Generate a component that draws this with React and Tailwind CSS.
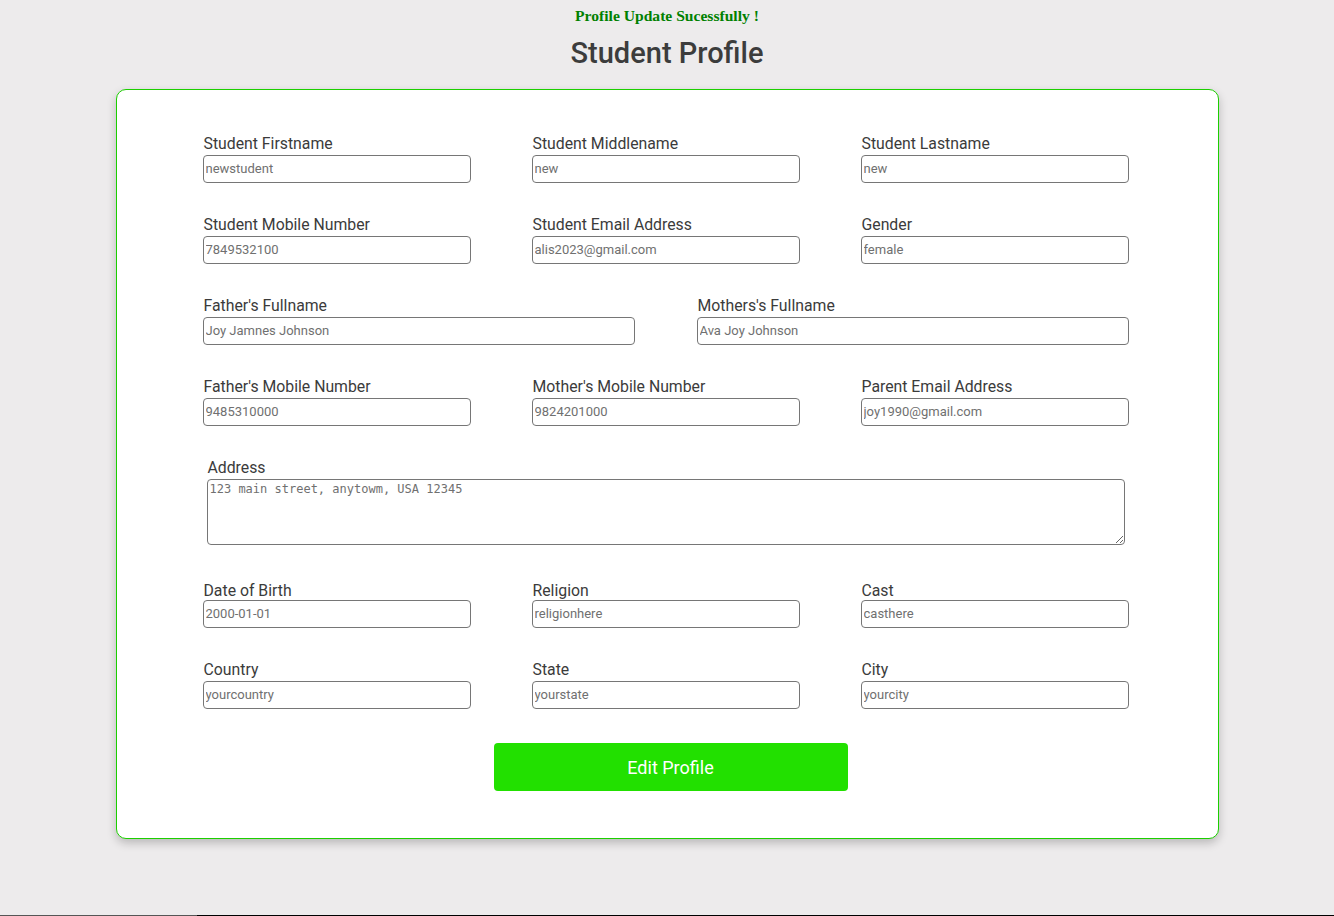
import React from "react";

const rows = [
  [
    ["Student Firstname", "newstudent"],
    ["Student Middlename", "new"],
    ["Student Lastname", "new"],
  ],
  [
    ["Student Mobile Number", "7849532100"],
    ["Student Email Address", "alis2023@gmail.com"],
    ["Gender", "female"],
  ],
];

const rowsAfterParents = [
  [
    ["Father's Mobile Number", "9485310000"],
    ["Mother's Mobile Number", "9824201000"],
    ["Parent Email Address", "joy1990@gmail.com"],
  ],
];

const rowsBottom = [
  [
    ["Date of Birth", "2000-01-01"],
    ["Religion", "religionhere"],
    ["Cast", "casthere"],
  ],
  [
    ["Country", "yourcountry"],
    ["State", "yourstate"],
    ["City", "yourcity"],
  ],
];

function Field({ label, value }) {
  return (
    <div className="flex flex-col">
      <label className="block h-[20px] leading-[22px] pl-[1px] text-[15.8px] text-[#3b3b3b]">{label}</label>
      <input
        readOnly
        value={value}
        className="mt-[2px] h-[28px] w-full rounded-[4px] border border-[#767676] bg-white px-[2px] pb-[2px] text-[13px] text-[#707070] outline-none"
        style={{ fontFamily: "Roboto, 'Liberation Sans', sans-serif" }}
      />
    </div>
  );
}

function Row3({ fields }) {
  return (
    <div className="grid grid-cols-[268px_268px_268px] gap-x-[61px] mb-[31px]">
      {fields.map(([l, v]) => (
        <Field key={l} label={l} value={v} />
      ))}
    </div>
  );
}

export default function App() {
  return (
    <div className="bg-[#edebec]" style={{ fontFamily: "Roboto, 'Liberation Sans', sans-serif" }}>
      <div className="h-[915px] flex flex-col items-center">
        <p
          className="mt-[6px] h-[20px] leading-[20px] text-[15.6px] font-bold text-[#008000]"
          style={{ fontFamily: "'Liberation Serif', serif" }}
        >
          Profile Update Sucessfully !
        </p>
        <h1 className="mt-[9px] h-[36px] leading-[36px] text-[29px] font-medium text-[#3c3c3c]">Student Profile</h1>

        <div className="mt-[18px] w-[1103px] rounded-[10px] border border-[#1ccf00] bg-white pt-[43px] pb-[47px] pl-[86px] shadow-[0_4px_10px_rgba(0,0,0,0.22)]">
          <div className="w-[926px]">
            {rows.map((r, i) => (
              <Row3 key={i} fields={r} />
            ))}

            <div className="grid grid-cols-[432px_432px] gap-x-[62px] mb-[31px]">
              <Field label="Father's Fullname" value="Joy Jamnes Johnson" />
              <Field label="Mothers's Fullname" value="Ava Joy Johnson" />
            </div>

            {rowsAfterParents.map((r, i) => (
              <Row3 key={i} fields={r} />
            ))}

            <div className="ml-[4px] mb-[34px] flex flex-col w-[918px]">
              <label className="block h-[20px] leading-[22px] pl-[1px] text-[15.8px] text-[#3b3b3b]">Address</label>
              <textarea
                readOnly
                value="123 main street, anytowm, USA 12345"
                className="mt-[2px] h-[66px] w-full rounded-[4px] border border-[#767676] bg-white px-[2px] pt-[2px] text-[12px] leading-[15px] text-[#707070] outline-none"
                style={{ fontFamily: "'DejaVu Sans Mono', 'Liberation Mono', monospace" }}
              />
            </div>

            <div className="grid grid-cols-[268px_268px_268px] gap-x-[61px] mb-[31px]">
              {rowsBottom[0].map(([l, v]) => (
                <div key={l} className="flex flex-col">
                  <label className="block h-[20px] leading-[24px] pl-[1px] text-[15.8px] text-[#3b3b3b]">{l}</label>
                  <input
                    readOnly
                    value={v}
                    className="mt-[1px] h-[28px] w-full rounded-[4px] border border-[#767676] bg-white px-[2px] pb-[2px] text-[13px] text-[#707070] outline-none"
                    style={{ fontFamily: "Roboto, 'Liberation Sans', sans-serif" }}
                  />
                </div>
              ))}
            </div>
            <Row3 fields={rowsBottom[1]} />

            <button className="ml-[291px] mt-[3px] h-[48px] w-[354px] rounded-[4px] bg-[#22e000] text-[18px] text-white">
              Edit Profile
            </button>
          </div>
        </div>
      </div>
      <div className="flex h-[1px]">
        <div className="w-[197px] bg-[#555555]" />
        <div className="flex-1 bg-black" />
      </div>
    </div>
  );
}
